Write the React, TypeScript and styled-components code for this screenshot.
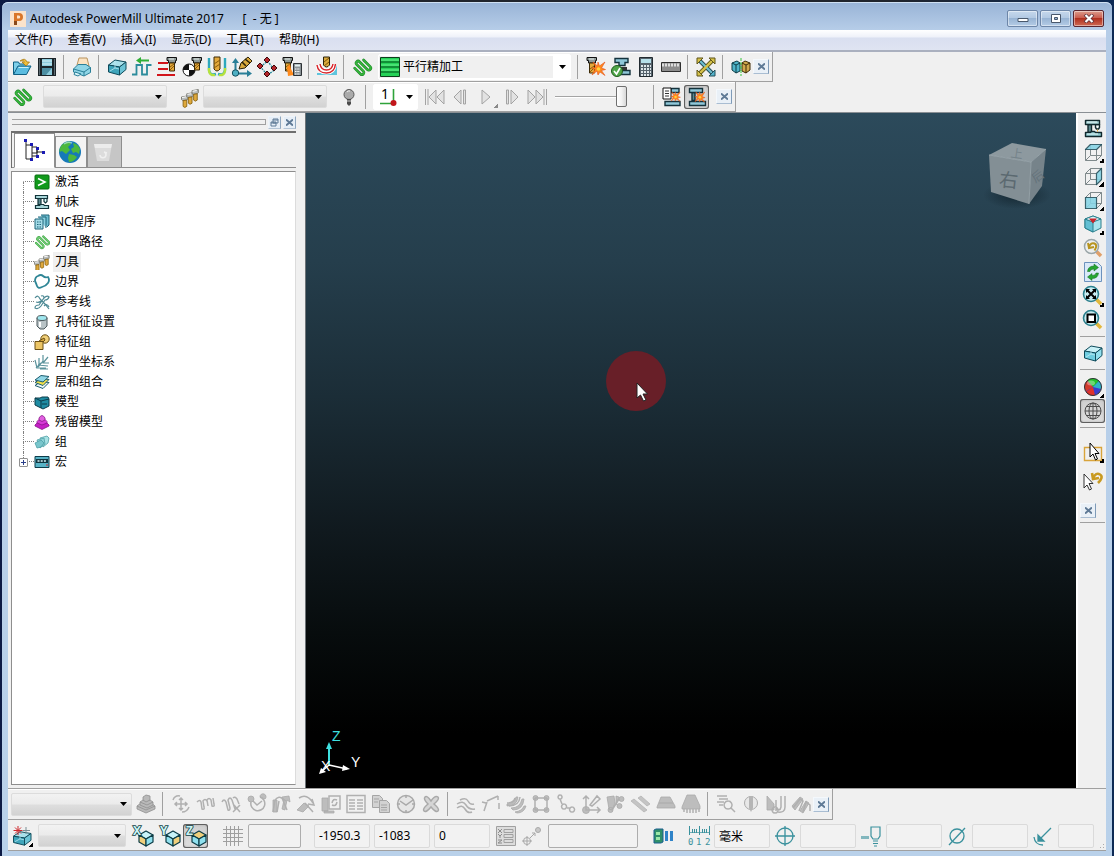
import React from "react";
import styled, { createGlobalStyle, css } from "styled-components";

const face = "#f0f0f0";
const line = "#a0a0a0";

const Global = createGlobalStyle`
  * { box-sizing: border-box; }
  body { margin: 0; background: #10131c; }
  body, button, input, select {
    font-family: "Noto Sans", "Noto Sans CJK SC", sans-serif;
    font-size: 12px;
    color: #000;
  }
  button, input, select { margin: 0; padding: 0; border: 0; background: none; }
`;

/* ---------- window frame ---------- */

const Desktop = styled.div`
  min-height: 100vh;
  display: flex;
  padding: 2px 2px 0;
  background: linear-gradient(90deg, #0c1a44, #20242c 20%, #20242c 80%, #0d2a55);
`;
const Window = styled.div`
  flex: 1;
  min-width: 0;
  display: flex;
  flex-direction: column;
  padding: 0 6px 5px;
  border-radius: 6px 6px 0 0;
  background: linear-gradient(#98b3d6 0, #b6cde8 28px, #b9d1ea 100%);
  box-shadow: inset 0 1px 0 #cfe0f2;
`;
const TitleBar = styled.header`
  height: 28px;
  display: flex;
  align-items: center;
  gap: 4px;
  padding: 5px 2px 0;
`;
const Title = styled.h1`
  flex: 1;
  margin: 0;
  font-size: 12px;
  line-height: 16px;
  font-weight: 400;
  white-space: pre;
`;
const Caption = styled.button<{ $close?: boolean }>`
  width: 31px;
  height: 17px;
  margin-left: -1px;
  display: grid;
  place-items: center;
  border: 1px solid ${(p) => (p.$close ? "#5a2630" : "#6d86a8")};
  border-radius: 2px;
  background: ${(p) =>
    p.$close
      ? "linear-gradient(#dd9c8c, #c9594b 48%, #b0301f 50%, #cf6a54)"
      : "linear-gradient(#c6d8ec, #b1c8e2 48%, #98b4d4 50%, #b4cce6)"};
  box-shadow: inset 0 0 0 1px rgba(255, 255, 255, 0.45);
`;
const CaptionGroup = styled.div`
  display: flex;
  gap: 3px;
`;

const MenuBar = styled.nav`
  height: 22px;
  display: flex;
  align-items: center;
  background: linear-gradient(#fff, #eef1f9 35%, #d9dff0 40%, #dfe4f2);
  border-bottom: 2px solid;
  border-color: ${line} ${line} #aab0bf;
`;
const MenuItem = styled.button`
  padding: 0 8px 0 7px;
  line-height: 16px;
`;

/* ---------- tool bars ---------- */

const Rebar = styled.div<{ $edge?: "top" | "bottom" }>`
  display: flex;
  background: ${face};
  ${(p) => p.$edge === "bottom" && css`border-bottom: 1px solid #8a8f94;`}
  ${(p) => p.$edge === "top" && css`border-top: 1px solid ${line};`}
`;
const Bar = styled.div<{ $height?: number }>`
  height: ${(p) => p.$height ?? 30}px;
  display: flex;
  align-items: center;
  padding: 0 2px 0 1px;
  border-bottom: 1px solid ${line};
  border-right: 1px solid ${line};
  box-shadow: inset 0 1px 0 #fff;
`;
const Separator = styled.span`
  width: 1px;
  height: 24px;
  margin: 0 5px 0 4px;
  background: ${line};
`;
const ToolButton = styled.button<{ $pressed?: boolean; $wide?: number }>`
  width: ${(p) => p.$wide ?? 25}px;
  height: 24px;
  flex: none;
  display: grid;
  place-items: center;
  position: relative;
  border-radius: 3px;
  ${(p) =>
    p.$pressed &&
    css`
      background: linear-gradient(#cfcfcf, #dedede);
      box-shadow: inset 0 0 0 1px #5f5f5f, inset 0 0 3px #777;
    `}
`;
const Corner = styled.i<{ $dim?: boolean }>`
  position: absolute;
  right: 1px;
  bottom: 1px;
  width: 5px;
  height: 5px;
  background: linear-gradient(135deg, transparent 50%, ${(p) => (p.$dim ? "#8a8a8a" : "#000")} 50%);
`;
const CloseBox = styled.button`
  width: 16px;
  height: 15px;
  flex: none;
  display: grid;
  place-items: center;
  background: #e9f0f7;
  border: 1px solid;
  border-color: #f4f8fc #7f9bb8 #a9bdd2 #f4f8fc;
`;
const Spacer = styled.span<{ $w: number }>`
  width: ${(p) => p.$w}px;
  flex: none;
`;

const ComboFrame = styled.span<{ $w: number; $flat?: boolean }>`
  width: ${(p) => p.$w}px;
  height: ${(p) => (p.$flat ? 26 : 23)}px;
  flex: none;
  display: grid;
  align-items: center;
  border-radius: 2px;
  border: 1px solid ${(p) => (p.$flat ? "#fff" : "#dcdcdc")};
  background: ${(p) => (p.$flat ? "#fff" : "linear-gradient(#f2f2f2, #ebebeb 48%, #dedede 52%, #d2d2d2)")};
  > * { grid-area: 1 / 1; }
  > svg { pointer-events: none; }
`;
const Select = styled.select<{ $pad?: number; $flat?: boolean }>`
  appearance: none;
  width: 100%;
  height: ${(p) => (p.$flat ? 22 : 21)}px;
  padding-left: ${(p) => p.$pad ?? 4}px;
  border-right: ${(p) => (p.$flat ? "17px solid #fff" : "0")};
  background: ${(p) => (p.$flat ? face : "none")};
`;
const Arrow = styled.svg`
  justify-self: end;
  margin-right: 4px;
`;
const LeadIcon = styled.span`
  padding-left: 1px;
  line-height: 0;
  pointer-events: none;
`;
const Range = styled.input`
  appearance: none;
  width: 72px;
  height: 22px;
  &::-webkit-slider-runnable-track {
    height: 2px;
    background: linear-gradient(#a4a4a4 50%, #fff 50%);
  }
  &::-webkit-slider-thumb {
    appearance: none;
    width: 11px;
    height: 21px;
    margin-top: -10px;
    border: 1px solid #6f6f6f;
    border-radius: 2px;
    background: linear-gradient(90deg, #fff, #f2f2f2 50%, #d8d8d8);
  }
`;
const Field = styled.input<{ $w?: number; $strong?: boolean }>`
  width: ${(p) => p.$w ?? 56}px;
  height: 24px;
  min-width: 0;
  padding-left: 4px;
  border: 1px solid ${(p) => (p.$strong ? "#adadad" : "#dadada")};
  border-radius: 2px;
  background: #f2f2f2;
`;
const Status = styled.footer`
  height: 31px;
  display: flex;
  align-items: center;
  padding: 1px 0 0 1px;
  overflow: hidden;
  background: ${face};
  border-bottom: 1px solid ${line};
`;
const Mark = styled.span<{ $w: number }>`
  width: ${(p) => p.$w}px;
  flex: none;
  display: grid;
  place-items: center;
`;
const Grip = styled.span`
  width: 10px;
  height: 10px;
  margin-left: auto;
  align-self: flex-end;
  background: radial-gradient(circle, #aaa 1px, transparent 1px) 0 0 / 3px 3px;
  clip-path: polygon(100% 0, 100% 100%, 0 100%);
`;

/* ---------- middle area ---------- */

const Main = styled.main`
  flex: 1;
  min-height: 0;
  display: flex;
  background: ${face};
`;
const Explorer = styled.aside`
  width: 298px;
  flex: none;
  display: flex;
  flex-direction: column;
  padding: 0 9px 3px 3px;
  border-right: 1px solid #6d7377;
`;
const ExplorerHead = styled.div`
  height: 18px;
  display: flex;
  align-items: center;
  gap: 2px;
`;
const Handle = styled.span`
  flex: 1;
  height: 6px;
  margin-left: 1px;
  border: solid ${line};
  border-width: 1px 1px 1px 0;
`;
const HeadButton = styled.button`
  width: 13px;
  height: 13px;
  display: grid;
  place-items: center;
  background: #e6eef6;
  border: 1px solid;
  border-color: #eef4fa #8fa8c0 #b4c5d6 #eef4fa;
`;
const Tabs = styled.div`
  height: 37px;
  display: flex;
  align-items: flex-end;
  padding-left: 2px;
  border: solid #6f6f6f;
  border-width: 2px 0 0 1px;
  box-shadow: inset 0 -1px 0 #8e8e8e;
`;
const Tab = styled.button<{ $kind: "active" | "plain" | "off" }>`
  width: ${(p) => (p.$kind === "active" ? 41 : p.$kind === "plain" ? 32 : 35)}px;
  height: ${(p) => (p.$kind === "active" ? 35 : 32)}px;
  display: grid;
  place-items: center;
  padding-right: ${(p) => (p.$kind === "active" ? 0 : 3)}px;
  border: 1px solid #8e8e8e;
  border-bottom-color: ${(p) => (p.$kind === "active" ? "#fff" : "#8e8e8e")};
  background: ${(p) => (p.$kind === "active" ? "#fff" : p.$kind === "plain" ? "#f4f4f4" : "#c6c6c6")};
`;
const Tree = styled.ul`
  flex: 1;
  margin: 3px 0 0;
  padding: 0;
  list-style: none;
  background: #fff;
  border: 1px solid #8e8e8e;
  border-right-color: #dcdcdc;
`;
const Node = styled.li`
  height: 20px;
  display: flex;
  align-items: center;
  position: relative;
`;
const Branch = styled.span<{ $first: boolean; $last: boolean }>`
  width: 11px;
  height: 20px;
  margin: 0 0 0 11px;
  display: grid;
  grid-template-rows: 10px 10px;
  &::before {
    content: "";
    border-left: 1px ${(p) => (p.$first ? "solid transparent" : "dotted #808080")};
    border-bottom: 1px dotted #808080;
  }
  &::after {
    content: "";
    border-left: 1px ${(p) => (p.$last ? "solid transparent" : "dotted #808080")};
  }
`;
const Expander = styled.button`
  position: absolute;
  left: 7px;
  top: 6px;
  width: 9px;
  height: 9px;
  display: grid;
  place-items: center;
  border: 1px solid #919191;
  border-radius: 1px;
  background: #fff;
`;
const NodeLabel = styled.span<{ $hot?: boolean }>`
  margin-left: 3px;
  padding: 0 2px;
  line-height: 20px;
  background: ${(p) => (p.$hot ? "#f0f0f0" : "none")};
`;
const Viewport = styled.section`
  flex: 1;
  min-width: 0;
  position: relative;
  overflow: hidden;
  background: linear-gradient(#2c4a5b 0%, #253e4c 22%, #1b2d37 42%, #10191e 62%, #070c0d 77%, #000 92%);
`;
const Cube = styled.svg`
  position: absolute;
  right: 24px;
  top: 24px;
`;
const Triad = styled.svg`
  position: absolute;
  left: 10px;
  bottom: 10px;
`;
const Pointer = styled.svg`
  position: absolute;
  left: 39%;
  top: 35%;
`;
const ViewBar = styled.aside`
  width: 30px;
  flex: none;
  padding: 3px 0 0 1px;
  border-left: 2px solid #fff;
`;
const ViewGroup = styled.div<{ $gap?: number; $pad?: number }>`
  display: flex;
  flex-direction: column;
  gap: ${(p) => p.$gap ?? 0}px;
  padding: ${(p) => p.$pad ?? 0}px 0 4px;
  margin: 0 1px 4px;
  border-bottom: 1px solid ${line};
`;

/* ---------- icons ---------- */

const holder = (
  <>
    <path d="M0 .5h9.5v3h-1v2.500h-7V3.500H0z" fill="#8f9a98" stroke="#111" />
    <path d="M2 2h5" stroke="#e8f0ee" />
  </>
);
const Mill = ({ x = 0, y = 0, h = 8 }: { x?: number; y?: number; h?: number }) => (
  <g transform={`translate(${x} ${y})`}>
    {holder}
    <path d={`M2.500 6h5v${h}h-5z`} fill="#e3a93c" stroke="#3d2b06" />
    <path d={`M3 ${5 + h}l4-4M3 ${2 + h}l4-3`} stroke="#8a5a0a" />
  </g>
);
const serpentine = "M-4 5.500H3.500a1.850 1.850 0 0 0 0-3.700H-5a1.800 1.800 0 0 1 0-3.600H5a1.850 1.850 0 0 0 0-3.700H-3.500";
const Zig = ({ c = "#36b53c", d = "#1d8427" }: { c?: string; d?: string }) => (
  <g fill="none" transform="translate(10 10) rotate(45) scale(1.1)" strokeLinecap="round">
    <path d={serpentine} stroke={d} strokeWidth="2.400" />
    <path d={serpentine} stroke={c} strokeWidth="1.500" />
  </g>
);
const Burst = ({ x = 0, y = 0 }: { x?: number; y?: number }) => (
  <g transform={`translate(${x} ${y})`}>
    <path
      d="M6 0l1.500 4L13 0l-3.500 6 4 1.500-4 1 3.500 5-5-3.500L6 13l-1-4-5 4 3-5.500L0 6l4-.5L1 0l4.500 4z"
      fill="#ff8a1c"
      stroke="#e4501a"
      strokeWidth=".6"
    />
    <circle cx="6.500" cy="7" r="1.800" fill="#ffd23c" />
  </g>
);
const Press = () => (
  <g stroke="#10282c" strokeWidth="1.400" strokeLinejoin="round">
    <path d="M5 6.500h3.500v8H5z" fill="#5e8a8f" />
    <path d="M12.500 6.500h4v3l-1 1.500h-2l-1-1.500z" fill="#f4fbfb" />
    <path d="M2.500 2.500h14v4h-14z" fill="#a8d6d9" />
    <path d="M2.500 14.500h5l1-1h3l1 1h6v4h-16z" fill="#8fcbd0" />
    <path d="M4 4h10M4 16h11" stroke="#e2f6f6" strokeWidth="1" />
    <path d="M14.500 11.500v2" stroke="#e2b03a" strokeWidth="1" />
  </g>
);
const Wire = ({ d }: { d: string }) => (
  <>
    <path d="M2.500 7.500h11v11h-11zM7.500 2.500h11v11h-11zM2.500 7.500l5-5M13.500 7.500l5-5M2.500 18.500l5-5M13.500 18.500l5-5" fill="none" stroke="#7f898b" />
    <path d={d} fill="#57c3da" fillOpacity=".85" stroke="#1d4c58" strokeWidth="1.200" strokeLinejoin="round" />
    <path d={d} fill="#fff" fillOpacity=".25" />
  </>
);
const Block = ({ open = false }: { open?: boolean }) => (
  <g stroke="#0e4a5a" strokeLinejoin="round">
    <path d="M1.500 8L8 3l11 2-6.500 5z" fill={open ? "#c9f1f7" : "#a9e0ea"} />
    <path d="M1.500 8l11 2v8l-11-3z" fill={open ? "#6fcde0" : "#3fa5bb"} />
    <path d="M12.500 10L19 5v7.500L12.500 18z" fill={open ? "#93e0ee" : "#6cc4d6"} />
    <path d="M3 14l5-3 4 1M8 4v7" fill="none" stroke="#bfeaf2" strokeWidth=".8" />
  </g>
);
const AxisCube = ({ letter, side }: { letter: string; side: "x" | "y" | "z" }) => (
  <>
    <g stroke="#0d3c46" strokeLinejoin="round" strokeWidth="1.200">
      <path d="M6 9l7-4 7 4-7 4z" fill={side === "z" ? "#f0cf7c" : "#c9f3f8"} />
      <path d="M6 9v7l7 4v-7z" fill={side === "x" ? "#f0cf7c" : "#8fe0ee"} />
      <path d="M13 13v7l7-4V9z" fill={side === "y" ? "#f0cf7c" : "#8fe0ee"} />
    </g>
    <text x="0" y="9" fontSize="12" fontWeight="700" fill="#c9f3f4" stroke="#123f45" strokeWidth="1.600" paintOrder="stroke">
      {letter}
    </text>
  </>
);
const Lens = () => (
  <g>
    <path d="M13 13l5 5" stroke="#e2b83c" strokeWidth="3.500" />
    <circle cx="8" cy="8" r="7.500" fill="#c9ecf1" stroke="#2b7f8c" strokeWidth="1.600" />
  </g>
);
const Dim = ({ d, fill }: { d: string; fill?: string }) => (
  <>
    {fill && <path d={fill} fill="#bdbdbd" stroke="#a9a9a9" strokeWidth=".8" />}
    <path d={d} fill="none" stroke="#b0b0b0" strokeWidth="1.500" />
  </>
);
const Tiny3 = () => (
  <>
    {[[0, 6], [5, 3], [10, 0]].map(([x, y]) => (
      <g key={x} transform={`translate(${x} ${y})`}>
        <path d="M.5 2.500l6-1v3l-1 1-4 .5-1-1z" fill="#b8bcbc" stroke="#6f6f66" strokeWidth=".8" />
        <path d="M2 6l3.500-.5v6q-2 2-3.500 0z" fill="#dfa93c" stroke="#85610f" strokeWidth=".8" />
        <path d="M1 3l4-.6" stroke="#fff" />
      </g>
    ))}
  </>
);

const icons: Record<string, React.ReactNode> = {
  open: (
    <g stroke="#0f5f83" strokeLinejoin="round">
      <path d="M1.500 17V5h5l1 2h6v3" fill="#7fd0ea" />
      <path d="M1.500 17.500L6 9h13l-4.500 8.500z" fill="#5bbce0" />
      <path d="M6.500 10.500h10" stroke="#c8effa" />
      <path d="M8 4q5-4 7 1h2.500L14 9l-4-4h2.500Q12 3 8 4z" fill="#f0bf3b" stroke="#a87a12" strokeWidth=".8" />
    </g>
  ),
  save: (
    <>
      <path d="M1 1h18v18H1z" fill="#1b2429" />
      <path d="M5 2h10v7H5zM5 11h10v7H5z" fill="#8ccbdc" />
      <path d="M5 4h10M5 7h10" stroke="#d8f2f8" />
      <path d="M2.500 2v16M17.500 2v16" stroke="#5c6b72" />
      <path d="M5 11h10l-6 7H5z" fill="#4d8fa3" />
    </>
  ),
  print: (
    <g strokeLinejoin="round">
      <path d="M5 8l2-7h8l2 8z" fill="#fbe3c2" stroke="#b8935e" />
      <path d="M1.500 12L6 7.500h8l4.500 3v5L12 19l-10.500-4z" fill="#8fd5e6" stroke="#2a7f98" />
      <path d="M1.500 12l10.500 3 6.500-4.500M12 15v4" fill="none" stroke="#2a7f98" />
      <path d="M3 15l6 2-3 2-4-1.500z" fill="#d5f3f9" stroke="#2a7f98" />
    </g>
  ),
  block: <Block />,
  rapid: (
    <>
      <path d="M0 17.500h4.500V8H10v9.500h5V8h4.500" fill="none" stroke="#2c8c9c" strokeWidth="1.800" />
      <path d="M17 3.500H8" stroke="#2fae35" strokeWidth="2" />
      <path d="M9 0v7L4 3.500z" fill="#2fae35" />
    </>
  ),
  feeds: (
    <>
      <path d="M1 6h10M1 12h10M0 18h18" stroke="#d2151b" strokeWidth="2.200" />
      <Mill x={10} y={0} h={8} />
    </>
  ),
  start: (
    <>
      <circle cx="7" cy="13" r="6" fill="#fff" stroke="#111" />
      <path d="M7 13V7a6 6 0 0 0-6 6zM7 13v6a6 6 0 0 0 6-6z" fill="#111" />
      <Mill x={10} y={0} h={7} />
    </>
  ),
  leads: (
    <>
      <path d="M2 1v12q1 6 7 4M18 1v12q-1 6-7 4" fill="none" stroke="#2ea8bd" strokeWidth="2.400" />
      <path d="M2 11v3q1 5 6 4M18 11v3q-1 5-6 4" fill="none" stroke="#b6e23c" strokeWidth="2.400" />
      <path d="M7 0h6v12q-3 4-6 0z" fill="#e3a93c" stroke="#3d2b06" />
      <path d="M7 7l6-4M7 11l6-4" stroke="#8a5a0a" />
    </>
  ),
  axis: (
    <>
      <path d="M3.500 4v12.500H16" fill="none" stroke="#2a7f98" strokeWidth="2" />
      <path d="M0 6l3.500-5L7 6zM15 13l5 3.500-5 3.500z" fill="#2a7f98" />
      <circle cx="3.500" cy="16" r="3.200" fill="#4fb0c4" stroke="#145060" />
      <path d="M7 12l2-6 7-6 4 4-7 7z" fill="#d9a93c" stroke="#2b2208" />
      <path d="M13 2l5 4M10 5l4 4" stroke="#2b2208" strokeWidth="1.600" />
    </>
  ),
  points: (
    <>
      <path d="M3.500 10l7-6 7 9-7 5z" fill="none" stroke="#2a8c9c" strokeWidth="1.400" strokeDasharray="2 1" />
      {[[10, 3], [3, 9], [17, 11], [10, 17]].map(([x, y]) => (
        <path key={`${x}-${y}`} d={`M${x - 3} ${y}l3-3 3 3-3 3z`} fill="#b3262b" stroke="#3c0809" />
      ))}
    </>
  ),
  toolcalc: (
    <>
      <Mill x={1} y={0} h={8} />
      <path d="M5 10l3-3 1 5 3 6-6 1z" fill="#ff8a1c" />
      <path d="M11.500 6.500h8v12h-8z" fill="#8b9397" stroke="#2d3236" />
      <path d="M13 8.500h5" stroke="#e3f0f0" strokeWidth="2" />
      <path d="M13 12h5M13 14.500h5M13 17h5" stroke="#fff" strokeDasharray="1.500 .8" />
    </>
  ),
  contact: (
    <>
      <path d="M0 18h20V8h-4q-1 8-8 8H0z" fill="#5fc4dc" />
      <path d="M3 7q1 6 6.500 6T16 7M0 8q1 8 9.500 8 8 0 9-9" fill="none" stroke="#fff" strokeWidth="3" />
      <path d="M3 7q1 6 6.500 6T16 7M0 8q1 8 9.500 8 8 0 9-9" fill="none" stroke="#d8262c" strokeWidth="1.500" />
      <path d="M6.500 0h6v8q-3 4-6 0z" fill="#d9a93c" stroke="#2b2208" />
      <path d="M7 5l5-4M7 9l5-4" stroke="#7b5309" />
    </>
  ),
  zig: <Zig />,
  raster: (
    <>
      <path d="M.5.5h19v19H.5z" fill="#25d257" stroke="#0d3f1b" />
      <path d="M1 5h18M1 10h18M1 15h18" stroke="#0a7a2c" strokeWidth="1.500" />
      <path d="M1 3h18M1 8h18M1 13h18" stroke="#6df090" />
    </>
  ),
  collide: (
    <>
      <Mill x={1} y={0} h={10} />
      <Burst x={6} y={5} />
    </>
  ),
  verify: (
    <>
      <path d="M4 1.500h13v4h-3v3H8v-3H4zM9 13.500h10v4H9z" fill="#8fc7d8" stroke="#14323c" strokeWidth="1.400" />
      <path d="M10 10h6v3h-6z" fill="#333" />
      <circle cx="6" cy="14" r="5.500" fill="#4fa548" stroke="#1f5c1c" />
      <path d="M3 14l2.500 3L9 11" fill="none" stroke="#fff" strokeWidth="1.600" />
    </>
  ),
  calc: (
    <>
      <path d="M3.500.5h13v19h-13z" fill="#56636c" stroke="#222b30" />
      <path d="M5 2h10v4H5z" fill="#b6e0ea" />
      <path d="M5 9h10M5 12h10M5 15h10M5 18h10" stroke="#dfe7ea" strokeWidth="2" strokeDasharray="2 1" />
    </>
  ),
  ruler: (
    <>
      <path d="M.5 5.500h19v9H.5z" fill="#8c8c8c" stroke="#2e2e2e" />
      <path d="M1 8h18" stroke="#dedede" strokeWidth="3" strokeDasharray="2 1" />
    </>
  ),
  expand: (
    <>
      <path d="M3 3l14 14" stroke="#27505a" strokeWidth="4" />
      <path d="M17 3L3 17" stroke="#5e5518" strokeWidth="4" />
      <path d="M3 3l14 14" stroke="#6fc0d2" strokeWidth="2" />
      <path d="M17 3L3 17" stroke="#d6c24a" strokeWidth="2.400" />
      <path d="M1 1h6L1 7zM19 1v6l-6-6zM1 19v-6l6 6z" fill="#d6c24a" stroke="#5e5518" />
      <path d="M19 19h-6l6-6z" fill="#54b4cc" stroke="#27505a" />
    </>
  ),
  mirror: (
    <g strokeLinejoin="round">
      <path d="M1 6l5-2 3 2v8l-4 2-4-3z" fill="#4fb4c9" stroke="#0d3c46" />
      <path d="M1 6l4 2 4-2M5 8v8" fill="none" stroke="#0d3c46" />
      <path d="M11 6l3-2 5 2v7l-4 3-4-2z" fill="#d1a94e" stroke="#3d2b06" />
      <path d="M11 6l4 2 4-2M15 8v8" fill="none" stroke="#3d2b06" />
      <path d="M10 1v18" stroke="#35c43a" strokeDasharray="3 1" />
    </g>
  ),
  tools: <g transform="translate(1 1) scale(1.05)"><Tiny3 /></g>,
  bulb: (
    <>
      <circle cx="10" cy="7.500" r="5" fill="#aaa" stroke="#5a5a5a" />
      <path d="M8 5q1-1.500 3-1" stroke="#eee" fill="none" />
      <path d="M8 12h4v5l-2 2-2-2z" fill="#4b4b4b" />
      <path d="M8 14h4" stroke="#ccc" />
    </>
  ),
  one: (
    <>
      <text x="2" y="12" fontSize="14" fill="#000">1</text>
      <path d="M1 16.500h12M14.500 2v12" stroke="#2fa33a" strokeWidth="1.600" />
      <circle cx="14.500" cy="16" r="3" fill="#c2161b" />
    </>
  ),
  first: <path d="M.5 2v16M3 2v16M11 3v14l-7-7zM19 3v14l-7-7z" fill="#e2e2e2" stroke="#a3a3a3" />,
  back: <path d="M11 3v14l-7-7zM13.500 3v14h2V3z" fill="#e2e2e2" stroke="#a3a3a3" />,
  play: <path d="M5 3v14l8-7z" fill="#e2e2e2" stroke="#a3a3a3" />,
  fwd: <path d="M9 3v14l7-7zM4.500 3v14h2V3z" fill="#e2e2e2" stroke="#a3a3a3" />,
  last: <path d="M19.500 2v16M17 2v16M9 3v14l7-7zM1 3v14l7-7z" fill="#e2e2e2" stroke="#a3a3a3" />,
  simA: (
    <>
      <path d="M9 1.500h8v4H9zM3 14.500h15v4H3z" fill="#8fc7d8" stroke="#14323c" strokeWidth="1.400" />
      <path d="M1 1h8v11H1z" fill="#fff" stroke="#111" />
      <path d="M3 4h4M3 6.500h4M3 9h4" stroke="#333" />
      <g transform="translate(9 5) scale(.7)"><Burst /></g>
    </>
  ),
  simB: (
    <>
      <g stroke="#14323c" strokeWidth="1.400">
        <path d="M5 5.500h3v8H5z" fill="#5e8a8f" />
        <path d="M2.500 1.500h13v4h-13zM2.500 14.500h16v4h-16z" fill="#8fc7d8" />
      </g>
      <g transform="translate(8 5) scale(.75)"><Burst /></g>
    </>
  ),
  press: <Press />,
  top: <Wire d="M2.500 7.500l5-5h11l-5 5z" />,
  right: <Wire d="M13.500 7.500l5-5v11l-5 5z" />,
  front: <Wire d="M2.500 7.500h11v11h-11z" />,
  iso: (
    <g strokeLinejoin="round">
      <path d="M2 5l8-3 8 3v9l-8 4-8-4z" fill="#a9e4ee" stroke="#2b7f8c" />
      <path d="M2 5l8 3v10l-8-4z" fill="#62bfd3" stroke="#2b7f8c" />
      <path d="M2 5l8 3 8-3-8-3z" fill="#d8f5f9" stroke="#2b7f8c" />
      <path d="M6 4.500l8 0-4 5z" fill="#c9252b" />
    </g>
  ),
  zoomback: (
    <>
      <path d="M13 13l5 5" stroke="#e0a06a" strokeWidth="3.500" />
      <circle cx="8.500" cy="8.500" r="7" fill="#eceeee" stroke="#9aa5a8" strokeWidth="1.500" />
      <path d="M5 5l1 5 5-1M6 9q2-5 5.500-3.500t0 7" fill="none" stroke="#b8941e" strokeWidth="2" />
    </>
  ),
  refresh: (
    <>
      <path d="M1.500.5h13l4 4v15h-17z" fill="#d9e9f9" stroke="#6d92bd" />
      <path d="M4.500 9.500q.5-5.500 6.500-5.500V2l4.500 3.500L11 9V7q-3.500 0-4 2.500zM15.500 11q-.5 5.500-6.500 5.500v2L4.500 15 9 11.500v2q3.500 0 4-2.500z" fill="#25a532" stroke="#106a1a" strokeWidth=".5" />
    </>
  ),
  zoomall: (
    <>
      <Lens />
      <path d="M4 4l8 8M12 4l-8 8" stroke="#000" strokeWidth="2" />
      <path d="M3 3h4L3 7zM13 3v4L9 3zM3 13V9l4 4zM13 13H9l4-4z" />
    </>
  ),
  zoombox: (
    <>
      <Lens />
      <path d="M4.500 4.500h7.500v7.500h-7.500z" fill="#fff" stroke="#000" strokeWidth="2" />
    </>
  ),
  blockview: <Block open />,
  shade: (
    <>
      <circle cx="10" cy="10" r="8.500" fill="#3c3ccc" />
      <path d="M10 10L4 3.500a8.500 8.500 0 0 1 12 .5z" fill="#23c42c" />
      <path d="M10 10L4 3.500a8.500 8.500 0 0 0-1 11z" fill="#d23a2c" />
      <path d="M10 10l-7 5a8.500 8.500 0 0 0 9 3.500z" fill="#e0312a" />
      <path d="M10 10l6-6a8 8 0 0 1 2 8z" fill="#2fb5c8" />
      <circle cx="10" cy="10" r="8.500" fill="none" stroke="#333" />
      <ellipse cx="8" cy="6" rx="4" ry="2.500" fill="#fff" opacity=".35" />
    </>
  ),
  globe: (
    <g fill="none" stroke="#4c4c4c">
      <circle cx="10" cy="10" r="8" />
      <ellipse cx="10" cy="10" rx="4" ry="8" />
      <path d="M10 2v16M2 10h16M3.500 5.500h13M3.500 14.500h13" />
    </g>
  ),
  select: (
    <>
      <path d="M1.500 5.500h17v13h-17z" fill="none" stroke="#d9a43a" strokeWidth="1.400" />
      <path d="M7 1v14l3-3 2.500 6 2-1-2.500-5.500h4z" fill="#fff" stroke="#000" />
    </>
  ),
  selback: (
    <>
      <path d="M1 3v14l3-3 2.500 5 2-1L6 12.500h4z" fill="#fff" stroke="#333" />
      <path d="M9 2l1 6 6-1M10 7q3-6 7-3.500T15 12" fill="none" stroke="#c99a20" strokeWidth="2.600" />
    </>
  ),
  clearblk: (
    <>
      <g transform="translate(0 3) scale(1 .9)"><Block /></g>
      <path d="M6 0v9M1.500 4.500h9M3 1.500l6 6M9 1.500l-6 6" stroke="#cf2a2f" />
      <path d="M14 1v7M11 4.500h7" stroke="#7a8f96" />
    </>
  ),
  cx: <AxisCube letter="X" side="x" />,
  cy: <AxisCube letter="Y" side="y" />,
  cz: <AxisCube letter="Z" side="z" />,
  grid: <path d="M3.500 0v20M7.500 0v20M11.500 0v20M15.500 0v20M0 3.500h20M0 7.500h20M0 11.500h20M0 15.500h20" stroke="#9f9f9f" />,
  xyz: (
    <>
      <path d="M.5.5h19v19H.5z" fill="#dcdcdc" stroke="#a0a0a0" />
      <path d="M8 3.500h9v3H8zM8 8.500h9v3H8zM8 13.500h9v3H8z" fill="none" stroke="#a0a0a0" />
      <path d="M2 3l4 4M6 3L2 7M2 8l2 2 2-2M4 10v2M2 14h4l-4 3h4" stroke="#8c8c8c" fill="none" />
    </>
  ),
  link: (
    <g fill="none" stroke="#a8a8a8">
      <circle cx="5" cy="15" r="3.500" />
      <path d="M5 10v10M0 15h10M8 12l5-5M10 7h3v3" />
      <circle cx="16" cy="4" r="2.500" fill="#c8c8c8" />
    </g>
  ),
  power: (
    <>
      <path d="M1 4l2-1h7v13l-2 1H1z" fill="#2e8f6a" stroke="#1a5f8e" />
      <path d="M3 6h4v3H3zM3 11h4v3H3z" fill="#9be8a8" />
      <path d="M12 5h3v10h-3zM17 5h3v10h-3z" fill="#2f83c8" />
    </>
  ),
  units: (
    <>
      <path d="M1.500 0v9M21.500 0v9M11.500 0v9M4.500 3v4M6.500 3v4M8.500 3v4M14.500 3v4M16.500 3v4M18.500 3v4" stroke="#3a919d" fill="none" />
      <path d="M2 6.500h20" stroke="#3a919d" strokeOpacity=".7" />
      <text x="0" y="19" fontSize="9" fontFamily="DejaVu Sans Mono" fill="#3a919d">0</text>
      <text x="8" y="19" fontSize="9" fontFamily="DejaVu Sans Mono" fill="#3a919d">1</text>
      <text x="17" y="19" fontSize="9" fontFamily="DejaVu Sans Mono" fill="#3a919d">2</text>
    </>
  ),
  target: (
    <g fill="none" stroke="#3a919d" strokeWidth="1.300">
      <circle cx="10" cy="10" r="8" />
      <path d="M10 0v20M0 10h20" />
    </g>
  ),
  tooltip: (
    <g fill="none" stroke="#3a919d" strokeWidth="1.200">
      <path d="M10 1h9v9l-2 3h-5l-2-3z" />
      <path d="M12 15h5M12 17.500h5M13 20h3" />
      <path d="M1 10v3M3 10v3M5 10v3M7 10v3" />
    </g>
  ),
  dia: (
    <g fill="none" stroke="#3a919d" strokeWidth="1.300">
      <circle cx="10" cy="10" r="7" />
      <path d="M2 19L18 2" />
    </g>
  ),
  tiprad: (
    <g fill="none" stroke="#3a919d" strokeWidth="1.300">
      <path d="M1 11q1 8 9 8M18 2L6 14" />
      <path d="M5 9v6h6z" fill="#3a919d" />
    </g>
  ),
  /* disabled editing tools */
  stock: (
    <g fill="#b9b9b9" stroke="#8f8f8f" strokeWidth=".8" strokeLinejoin="round">
      <path d="M1 12l4-3h10l4 3v3l-9 4-9-4z" />
      <path d="M4 8l3-2h7l3 2v3l-6 3-7-3z" />
      <path d="M7 3l3-2 4 1v4l-4 2-3-2z" />
      <path d="M1 12l9 4 9-4M4 8l7 3 6-3" fill="none" />
    </g>
  ),
  d1: <Dim d="M10 4v12M4 10h12M8 6l2-2 2 2M8 14l2 2 2-2M6 8l-2 2 2 2M14 8l2 2-2 2M2 6q2-5 7-4M18 13q-2 5-7 5" />,
  d2: <Dim d="M1 8q3-3 4 0l1 7q3 1 2-2L7 7q2-3 4 0M12 12l-1-6q2-3 4 0l1 6q3 1 2-2l-1-6" />,
  d3: <Dim d="M1 8q2-4 4 0l2 8q2 1 2-2L7 6q2-4 4 0l3 9M12 4q2-2 4 1l2 5M12 18l7-7M13 11l6 7" />,
  d4: <Dim d="M5 8a7 7 0 1 0 9-5M7 7l4 4 5-4" fill="M2 5a3 3 0 1 1 6 0 3 3 0 1 1-6 0M14 3a3 3 0 1 1 5 2z" />,
  d5: <Dim d="M2 18l2-12M6 18L8 7M11 4l5 12M4 6q4-5 8-1l3 2" fill="M2 6h4v12H2zM11 3l7-1 1 6-3-2-2 10-3-1 2-9z" />,
  d6: <Dim d="M3 4q8-5 14 5M9 9l8 9M16 5l2 6-6-1" fill="M1 16l7-7 5 3-6 6z" />,
  d7: <Dim d="M8 2h11v13H8zM11 9q1-5 5-3M16 8q-1 5-5 3" fill="M1 4h6v13H1zM3 17h10v2H3z" />,
  d8: <Dim d="M1 1.500h18v17H1zM3 6h6M3 9h6M3 12h6M3 15h6M11 6h6M11 9h6M11 12h6M11 15h6" />,
  d9: (
    <g fill="#d2d2d2" stroke="#a5a5a5">
      <path d="M1.500 1.500h7l3 3v9h-10z" />
      <path d="M8.500 6.500h7l3 3v9h-10z" />
      <path d="M3 5h5M3 8h4M10 11h6M10 13.500h6M10 16h6" />
    </g>
  ),
  d10: (
    <>
      <circle cx="10" cy="10" r="8.500" fill="#e6e6e6" stroke="#a9a9a9" strokeWidth="1.500" />
      <path d="M4 7l6 4 7-5M10 2v2M10 16v2M2 10h2M16 10h2" fill="none" stroke="#a9a9a9" strokeWidth="1.500" />
    </>
  ),
  d11: <path d="M4 3q2-2 6 4 4-6 7-4 2 2-4 7 6 5 4 7t-7-4q-5 6-7 4t4-7Q2 5 4 3z" fill="#d5d5d5" stroke="#a9a9a9" strokeWidth="1.500" />,
  e1: <Dim d="M1 10q6-4 9 1t9 4M1 14q5-4 8 1t7 3M4 6q6-3 8 1t6 3" />,
  e2: <Dim d="M3 17l3-9M6 7l11-5M5 9l-4-1M17 2v4M18 9v6" />,
  e3: <Dim d="M9 4q-1 5-8 5M14 3q-1 9-11 9" fill="M1 10q8 0 9-7h2q-1 9-11 9zM5 14q9 0 11-9h2q-1 11-11 11zM9 18q7-1 9-6h2q-2 7-9 7z" />,
  e4: <Dim d="M4 4h12M4 16h12M4 4v12M16 4v12" fill="M2 4a2.500 2.500 0 1 1 5 0 2.500 2.500 0 1 1-5 0M13 4a2.500 2.500 0 1 1 5 0 2.500 2.500 0 1 1-5 0M2 16a2.500 2.500 0 1 1 5 0 2.500 2.500 0 1 1-5 0M13 16a2.500 2.500 0 1 1 5 0 2.500 2.500 0 1 1-5 0" />,
  e5: <Dim d="M4 1a2 2 0 1 0 .1 0M4 5l2 5M8 10a2.500 2.500 0 1 0 .1 0M11 14h3M16 13a2.500 2.500 0 1 0 .1 0" />,
  e6: <Dim d="M5 3v13h13M2 5l3-3 3 3M16 13l3 3-3 3M9 11l7-9 3 3-8 7z" fill="M1.500 16a3.500 3.500 0 1 1 7 0 3.500 3.500 0 1 1-7 0" />,
  e7: <Dim d="M13 5l-7 11" fill="M1 3l7-1 1 7-3 7-3-1zM10 2l3 1-3 8zM13 5a2.500 2.500 0 1 1 5 0 2.500 2.500 0 1 1-5 0M2 16a2.500 2.500 0 1 1 5 0 2.500 2.500 0 1 1-5 0M11 12a2.500 2.500 0 1 1 5 0 2.500 2.500 0 1 1-5 0" />,
  e8: (
    <path d="M0 7l3-2 13 11-3 2zM7 4l3-2 9 8-3 2z" fill="#c4c4c4" stroke="#b4b4b4" strokeWidth=".8" />
  ),
  e9: <Dim d="M3 9h14" fill="M5 3h9l5 9v2H1v-1z" />,
  e10: <Dim d="M3 15v3M6 15v4M9 15v4M12 15v4M15 15v4M18 15v3" fill="M6 1h8l5 11v3H1v-2z" />,
  f1: <Dim d="M1 2h10M3 5h9M1 8h7M3 11h4M12 7a4 4 0 1 0 .1 0M15 14l4 4" />,
  f2: (
    <>
      <circle cx="10" cy="9" r="6.500" fill="#e8e8e8" stroke="#ababab" />
      <path d="M8 2h4v12l-2 4-2-4z" fill="#b5b5b5" />
    </>
  ),
  f3: <Dim d="M10 17V6M10 14q4 4 5-1V2M19 2v11q0 6-7 5M9 13a3 3 0 1 0 .1 0" fill="M1 2l7 8v6H1z" />,
  f4: <Dim d="M2 14l7-9 3 2-4 10M12 18l3-10 4 3v6" fill="M1 12L9 3l3 2-8 11zM9 17l6-10 3 2-6 10z" />,
};

const Icon = ({ name, w = 20 }: { name: string; w?: number }) => (
  <svg width={w} height={20} viewBox={`0 0 ${w} 20`} overflow="visible" aria-hidden="true">
    {icons[name]}
  </svg>
);

const treeIcons: Record<string, React.ReactNode> = {
  active: (
    <>
      <rect x="1" y="1" width="14" height="14" rx="1" fill="#119a1b" stroke="#0b6e12" />
      <path d="M4 4.500l7 3.500-7 3.500" fill="none" stroke="#fff" strokeWidth="1.600" />
    </>
  ),
  machine: (
    <g stroke="#12343a" strokeWidth="1.200">
      <path d="M4 4.500h3v6H4z" fill="#5e8a8f" />
      <path d="M10 4.500h3v3l-1.500 1.500L10 7.500z" fill="#dff" />
      <path d="M1.500 1.500h12v3h-12zM1.500 11.500h4l1-1h3l1 1h4v3h-13z" fill="#a8d6d9" />
    </g>
  ),
  nc: (
    <g stroke="#1e6478" strokeLinejoin="round">
      <path d="M7 1h8v10l-2 2" fill="#6dbdd0" />
      <path d="M4 3h8v11" fill="#8ad0e0" />
      <path d="M1 5h8v10H1z" fill="#a5dce8" />
      <path d="M3 8h4M3 10.500h4M3 13h4" strokeDasharray="1.500 1" />
    </g>
  ),
  path: <g transform="scale(.8)"><Zig c="#6fca72" d="#35a03b" /></g>,
  tool: <g transform="scale(.92)"><Tiny3 /></g>,
  boundary: <path d="M4 2q3-2 5 0t5 1q2 3 0 6t-6 4q-4 2-5-1T1 7q0-4 3-5z" fill="none" stroke="#2f8696" strokeWidth="1.800" />,
  pattern: (
    <g fill="none" stroke="#4d8994" strokeWidth="1.200">
      <path d="M1 4q3-4 5 1l5 5 4 5M2 8q3 1 5-1M1 14q0-3 4-3l5-7q3-3 5-1-1 3-4 3l-4 6q-3 4-6 2zM10 12q3-3 5 1M7 2q3-1 3 2" />
    </g>
  ),
  hole: (
    <>
      <path d="M3 4v8l3 3h4l3-3V4z" fill="#b9c3c6" stroke="#4e5a5e" />
      <ellipse cx="8" cy="4" rx="5" ry="2.500" fill="#9fe6ee" stroke="#4e5a5e" />
      <path d="M6 8v5" stroke="#fff" strokeWidth="2" />
    </>
  ),
  feature: (
    <>
      <circle cx="11" cy="5" r="4.200" fill="#f1d07a" stroke="#6b4f14" />
      <path d="M5 7l5-3 1 2-4 4" fill="#d5a63e" stroke="#6b4f14" />
      <path d="M1 7.500h8v8H1z" fill="#ecc565" stroke="#6b4f14" />
    </>
  ),
  ucs: (
    <g stroke="#5b939c" strokeWidth="1.200" fill="none">
      <path d="M1 6l2 8h9M5 4v8l4-5M9 1v8h6M2 14l5-5M9 9l5-6M4 11l10 1M6 15h8" />
    </g>
  ),
  layers: (
    <g strokeLinejoin="round" stroke="#1c5c6e">
      <path d="M1 11.500l6-4 8 1-6 6z" fill="#ecf7f9" />
      <path d="M1 8.500l6-4 8 1-6 6z" fill="#f0e04a" />
      <path d="M1 6l6-4.500 8 1-6 5.500z" fill="#8fd6e6" />
    </g>
  ),
  model: (
    <g stroke="#0d3c4a" strokeLinejoin="round">
      <path d="M1 4l5 0 2-1h6l1 2v7l-6 3-8-4z" fill="#1f8ca3" />
      <path d="M1 4l6 3 8-2M7 7v7M8 10h5" fill="none" />
    </g>
  ),
  stockmodel: (
    <g stroke="#8a148a" strokeWidth=".8">
      <path d="M1 11l3-3h8l3 3v1l-7 3.500L1 12z" fill="#c520c5" />
      <path d="M3 7.500l2-2h6l2 2v1.500l-5 2-5-2z" fill="#d63ad6" />
      <path d="M5 4q3-5 6 0v2L8 7.500 5 6z" fill="#e060e0" />
    </g>
  ),
  group: (
    <g stroke="#4ea0a6" strokeWidth=".8">
      <path d="M6 4l7-2 2 2-1 5-5 4z" fill="#a8e2e4" />
      <path d="M3 6l7-2 1 6-5 4z" fill="#8fd4d8" />
      <path d="M1 9l6-3 3 3-3 4-4 1z" fill="#79c6cc" />
    </g>
  ),
  macro: (
    <>
      <path d="M1 2.500h14v11H1z" fill="#58b3c6" stroke="#0d3c4a" />
      <path d="M2 5h12v4H2z" fill="#103640" />
      <path d="M3.500 7h9" stroke="#d7f4f8" strokeWidth="1.600" strokeDasharray="2 1.200" />
      <path d="M12 11h2" stroke="#c23" />
    </>
  ),
};

const tree: { label: string; icon: string }[] = [
  { label: "激活", icon: "active" },
  { label: "机床", icon: "machine" },
  { label: "NC程序", icon: "nc" },
  { label: "刀具路径", icon: "path" },
  { label: "刀具", icon: "tool" },
  { label: "边界", icon: "boundary" },
  { label: "参考线", icon: "pattern" },
  { label: "孔特征设置", icon: "hole" },
  { label: "特征组", icon: "feature" },
  { label: "用户坐标系", icon: "ucs" },
  { label: "层和组合", icon: "layers" },
  { label: "模型", icon: "model" },
  { label: "残留模型", icon: "stockmodel" },
  { label: "组", icon: "group" },
  { label: "宏", icon: "macro" },
];

/* ---------- small composites ---------- */

type ToolProps = { name: string; label?: string; pressed?: boolean; corner?: boolean; dimCorner?: boolean; wide?: number };
const Tool = ({ name, label, pressed, corner, dimCorner, wide }: ToolProps) => (
  <ToolButton type="button" aria-label={label ?? name} $pressed={pressed} $wide={wide}>
    <Icon name={name} />
    {corner && <Corner $dim={dimCorner} />}
  </ToolButton>
);
const ToolRun = ({ names }: { names: string[] }) => (
  <>
    {names.map((n) => (
      <Tool key={n} name={n} />
    ))}
  </>
);
const Cross = () => (
  <svg width="7" height="7" viewBox="0 0 7 7" aria-hidden="true">
    <path d="M0 .5l7 6M7 .5l-7 6" stroke="#5f7a96" strokeWidth="2" />
  </svg>
);
const Close = () => (
  <CloseBox type="button" aria-label="关闭">
    <Cross />
  </CloseBox>
);
const Combo = ({ w, label, value = "", flat, icon, pad }: { w: number; label: string; value?: string; flat?: boolean; icon?: string; pad?: number }) => (
  <ComboFrame $w={w} $flat={flat}>
    <Select aria-label={label} $flat={flat} $pad={pad} defaultValue={value}>
      <option value={value}>{value}</option>
    </Select>
    {icon && (
      <LeadIcon>
        <Icon name={icon} />
      </LeadIcon>
    )}
    <Arrow width="7" height="4" viewBox="0 0 7 4" aria-hidden="true">
      <path d="M0 0h7L3.500 4z" />
    </Arrow>
  </ComboFrame>
);

export default function App() {
  return (
    <>
      <Global />
      <Desktop>
        <Window>
          <TitleBar>
            <svg width="16" height="16" viewBox="0 0 16 16" aria-hidden="true">
              <path d="M0 0h16v16H0z" fill="#fbe3cb" />
              <path d="M4 2h5q4 0 4 4t-4 4H7v4H4zM7 4.500v3h2q1.200 0 1.200-1.500T9 4.500z" fill="#d9762a" fillRule="evenodd" />
              <path d="M4 10h3v4H4z" fill="#8a4a1c" />
            </svg>
            <Title>{"Autodesk PowerMill Ultimate 2017      [  - 无 ]"}</Title>
            <CaptionGroup>
              <Caption type="button" aria-label="最小化">
                <svg width="12" height="9" viewBox="0 0 12 9"><path d="M1 4.500h10v3H1z" fill="#fff" stroke="#49586c" /></svg>
              </Caption>
              <Caption type="button" aria-label="最大化">
                <svg width="12" height="9" viewBox="0 0 12 9"><path d="M1.500.5h9v8h-9zM4.500 3.500h3v2h-3z" fill="#fff" stroke="#49586c" fillRule="evenodd" /></svg>
              </Caption>
              <Caption type="button" aria-label="关闭" $close>
                <svg width="12" height="9" viewBox="0 0 12 9">
                  <path d="M2 .5l8 8M10 .5l-8 8" stroke="#5b3038" strokeWidth="3.600" />
                  <path d="M2.500 1l7 7M9.500 1l-7 7" stroke="#fff" strokeWidth="2.200" />
                </svg>
              </Caption>
            </CaptionGroup>
          </TitleBar>

          <MenuBar>
            {["文件(F)", "查看(V)", "插入(I)", "显示(D)", "工具(T)", "帮助(H)"].map((m) => (
              <MenuItem key={m} type="button">{m}</MenuItem>
            ))}
          </MenuBar>

          <Rebar>
            <Bar>
              <ToolRun names={["open", "save"]} />
              <Separator />
              <Tool name="print" />
              <Separator />
              <ToolRun names={["block", "rapid", "feeds", "start", "leads", "axis", "points", "toolcalc"]} />
              <Separator />
              <Tool name="contact" />
              <Separator />
              <Tool name="zig" />
              <Spacer $w={4} />
              <Combo w={193} label="策略" value="平行精加工" flat icon="raster" pad={24} />
              <Spacer $w={2} />
              <Separator />
              <ToolRun names={["collide", "verify", "calc", "ruler"]} />
              <Separator />
              <Tool name="expand" />
              <Separator />
              <Tool name="mirror" />
              <Close />
              <Spacer $w={1} />
            </Bar>
          </Rebar>

          <Rebar $edge="bottom">
            <Bar>
              <Tool name="zig" label="刀具路径" />
              <Spacer $w={9} />
              <Combo w={124} label="激活刀具路径" />
              <Spacer $w={10} />
              <Tool name="tools" />
              <Spacer $w={1} />
              <Combo w={124} label="激活刀具" />
              <Spacer $w={9} />
              <Tool name="bulb" />
              <Separator />
              <Spacer $w={2} />
              <ComboFrame $w={45} $flat>
                <ToolButton type="button" aria-label="附着仿真" $wide={30}>
                  <Icon name="one" />
                </ToolButton>
                <Arrow width="7" height="4" viewBox="0 0 7 4"><path d="M0 0h7L3.500 4z" /></Arrow>
              </ComboFrame>
              <Spacer $w={4} />
              <ToolRun names={["first", "back"]} />
              <Spacer $w={2} />
              <Tool name="play" corner dimCorner />
              <ToolRun names={["fwd", "last"]} />
              <Spacer $w={6} />
              <Range type="range" aria-label="速度" defaultValue={100} />
              <Spacer $w={22} />
              <Separator />
              <Tool name="simA" />
              <Tool name="simB" pressed />
              <Spacer $w={7} />
              <Close />
              <Spacer $w={1} />
            </Bar>
          </Rebar>

          <Main>
            <Explorer>
              <ExplorerHead>
                <Handle />
                <HeadButton type="button" aria-label="浮动">
                  <svg width="9" height="9" viewBox="0 0 9 9"><path d="M3 1h5v4H3zM1 4h5v4H1zM3 2h5M1 5h5" fill="none" stroke="#5f7a96" /></svg>
                </HeadButton>
                <HeadButton type="button" aria-label="关闭">
                  <Cross />
                </HeadButton>
              </ExplorerHead>
              <Tabs>
                <Tab type="button" aria-label="浏览器" $kind="active">
                  <svg width="22" height="24" viewBox="0 0 22 24">
                    <path d="M2 2v18h6M2 6h6v13M8 8h5v6H8M13 9v4h7M13 13v4H8" fill="none" stroke="#222" />
                    <path d="M0 0h3v3H0zM6 4h3v3H6zM12 8h3v3h-3zM18 12h3v3h-3zM12 16h3v3h-3zM6 19h3v3H6z" fill="#1a1ab4" />
                  </svg>
                </Tab>
                <Tab type="button" aria-label="网络" $kind="plain">
                  <svg width="24" height="24" viewBox="0 0 24 24">
                    <circle cx="12" cy="12" r="11" fill="#1679b8" />
                    <path d="M3 6q4-5 9-4.500L13 4l-3 3 2 3-4 4-4-3-2.500 1Q1 9 3 6zM15 3q5 1 7 6l-1 5-3-2-3 1-2-4 3-2zM11 14l5 1 3 2q-3 5-8 5l-1-4z" fill="#4cb83e" />
                    <path d="M6 4q4-3 8-1" stroke="#c9eefa" strokeWidth="1.500" fill="none" opacity=".6" />
                  </svg>
                </Tab>
                <Tab type="button" aria-label="回收站" $kind="off">
                  <svg width="22" height="22" viewBox="0 0 22 22">
                    <path d="M2 3l18 0-3 17H5z" fill="#dcdcdc" />
                    <path d="M2 3h18l-1 4H3z" fill="#ececec" />
                    <path d="M8 14a3 3 0 1 0 4-3l3 1" fill="none" stroke="#f0f0f0" strokeWidth="1.500" />
                  </svg>
                </Tab>
              </Tabs>
              <Tree>
                {tree.map((n, i) => (
                  <Node key={n.label}>
                    <Branch $first={i === 0} $last={i === tree.length - 1} />
                    {i === tree.length - 1 && (
                      <Expander type="button" aria-label="展开">
                        <svg width="5" height="5" viewBox="0 0 5 5"><path d="M0 2.500h5M2.500 0v5" stroke="#2b3f8a" /></svg>
                      </Expander>
                    )}
                    <svg width="16" height="16" viewBox="0 0 16 16" aria-hidden="true">{treeIcons[n.icon]}</svg>
                    <NodeLabel $hot={n.icon === "tool"}>{n.label}</NodeLabel>
                  </Node>
                ))}
              </Tree>
            </Explorer>

            <Viewport aria-label="图形视窗">
              <Cube width="70" height="76" viewBox="0 0 70 76">
                <defs>
                  <radialGradient id="shade">
                    <stop offset="0" stopColor="#0d1c24" stopOpacity=".7" />
                    <stop offset="1" stopColor="#0d1c24" stopOpacity="0" />
                  </radialGradient>
                </defs>
                <ellipse cx="35" cy="58" rx="34" ry="14" fill="url(#shade)" />
                <path d="M7 18l23-12 34 6-15 13z" fill="#8d999f" />
                <path d="M7 18l42 7-2 42-38-12z" fill="#838f95" />
                <path d="M49 25l15-13-4 37-13 18z" fill="#76838a" />
                <path d="M7 18l42 7 15-13M49 25l-2 42" fill="none" stroke="#9fabb0" strokeWidth=".8" />
                <text x="17" y="50" fontSize="19" fill="#5b6970" transform="rotate(6 26 44)">右</text>
                <text x="50" y="44" fontSize="12" fill="#64727a" transform="rotate(-35 55 40)">后</text>
                <text x="29" y="21" fontSize="12" fill="#75838a" transform="rotate(8 36 16)">上</text>
              </Cube>
              <Pointer width="62" height="62" viewBox="0 0 62 62">
                <circle cx="30" cy="33" r="30" fill="#681f28" transform="translate(0 -1)" />
                <path d="M31 34v15l3.500-3 3 6 2.500-1-3-6h4.500z" fill="#fff" stroke="#222" />
              </Pointer>
              <Triad width="48" height="50" viewBox="0 0 48 50" fontFamily="Liberation Sans" fontSize="14">
                <path d="M13 37V20" stroke="#3fe0e0" strokeWidth="2" />
                <path d="M13 14l3 7h-6z" fill="#3fe0e0" />
                <text x="16" y="13" fill="#3fe0e0">Z</text>
                <path d="M13 37l18 4M13 37l-8 7" stroke="#fff" strokeWidth="1.600" />
                <path d="M27 37l7 4-8 2zM3 46l2-6 5 4z" fill="#fff" />
                <text x="35" y="39" fill="#fff">Y</text>
                <text x="5" y="43" fill="#fff">X</text>
              </Triad>
            </Viewport>

            <ViewBar>
              <ViewGroup>
                <Tool name="press" />
                <Tool name="top" corner />
                <Tool name="right" corner />
                <Tool name="front" corner />
                <Tool name="iso" corner />
                <Tool name="zoomback" />
                <Tool name="refresh" />
                <Tool name="zoomall" corner />
                <Tool name="zoombox" />
              </ViewGroup>
              <ViewGroup>
                <Tool name="blockview" />
              </ViewGroup>
              <ViewGroup $pad={1}>
                <Tool name="shade" corner />
                <Tool name="globe" pressed />
                <Spacer $w={1} />
              </ViewGroup>
              <ViewGroup $gap={5} $pad={8}>
                <Tool name="select" corner />
                <Tool name="selback" />
                <Spacer $w={1} />
                <Close />
              </ViewGroup>
            </ViewBar>
          </Main>

          <Rebar $edge="top">
            <Bar $height={31}>
              <Spacer $w={2} />
              <Combo w={121} label="残留模型" />
              <Spacer $w={1} />
              <Tool name="stock" />
              <Separator />
              <ToolRun names={["d1", "d2", "d3", "d4", "d5", "d6", "d7", "d8", "d9", "d10", "d11"]} />
              <Separator />
              <ToolRun names={["e1", "e2", "e3", "e4", "e5", "e6", "e7", "e8", "e9", "e10"]} />
              <Separator />
              <ToolRun names={["f1", "f2", "f3", "f4"]} />
              <Close />
              <Spacer $w={1} />
            </Bar>
          </Rebar>

          <Status>
            <Tool name="clearblk" corner />
            <Spacer $w={4} />
            <Combo w={88} label="激活坐标系" />
            <Spacer $w={3} />
            <Tool name="cx" wide={27} />
            <Tool name="cy" wide={27} />
            <Tool name="cz" wide={25} pressed />
            <Spacer $w={12} />
            <Tool name="grid" />
            <Spacer $w={3} />
            <Field $w={53} $strong readOnly aria-label="栅格" />
            <Spacer $w={13} />
            <Field readOnly aria-label="X" value="-1950.3" />
            <Spacer $w={4} />
            <Field readOnly aria-label="Y" value="-1083" />
            <Spacer $w={4} />
            <Field readOnly aria-label="Z" value="0" />
            <Spacer $w={3} />
            <Tool name="xyz" />
            <Tool name="link" wide={27} />
            <Spacer $w={3} />
            <Field $w={90} $strong readOnly aria-label="信息" />
            <Spacer $w={12} />
            <Tool name="power" />
            <Spacer $w={9} />
            <Mark $w={30}><Icon name="units" w={22} /></Mark>
            <Field readOnly aria-label="单位" value="毫米" />
            <Mark $w={30}><Icon name="target" /></Mark>
            <Field readOnly aria-label="公差" />
            <Mark $w={30}><Icon name="tooltip" /></Mark>
            <Field readOnly aria-label="余量" />
            <Mark $w={30}><Icon name="dia" /></Mark>
            <Field readOnly aria-label="直径" />
            <Mark $w={30}><Icon name="tiprad" /></Mark>
            <Field $w={36} readOnly aria-label="刀尖半径" />
            <Grip />
          </Status>
        </Window>
      </Desktop>
    </>
  );
}
